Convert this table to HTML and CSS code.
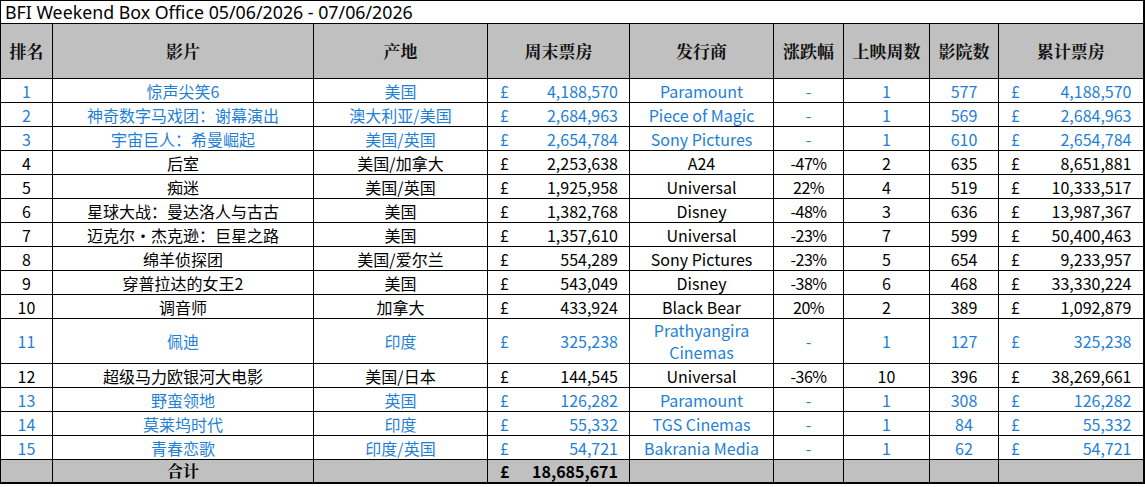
FILE: index.html
```html
<!DOCTYPE html>
<html lang="zh">
<head>
<meta charset="utf-8">
<title>BFI Weekend Box Office</title>
<link rel="stylesheet" href="styles.css">
</head>
<body>
<table class="bo">
<colgroup>
<col class="c-rank"><col class="c-film"><col class="c-origin"><col class="c-gross"><col class="c-dist"><col class="c-chg"><col class="c-wk"><col class="c-cin"><col class="c-total">
</colgroup>
<thead>
<tr class="title-row"><td colspan="9" class="title">BFI Weekend Box Office 05/06/2026 - 07/06/2026</td></tr>
<tr class="head-row">
<th>排名</th><th>影片</th><th>产地</th><th>周末票房</th><th>发行商</th><th>涨跌幅</th><th>上映周数</th><th>影院数</th><th>累计票房</th>
</tr>
</thead>
<tbody>
<tr class="new"><td>1</td><td>惊声尖笑6</td><td>美国</td><td><div class="money"><span>£</span><span>4,188,570</span></div></td><td>Paramount</td><td>-</td><td>1</td><td>577</td><td><div class="money"><span>£</span><span>4,188,570</span></div></td></tr>
<tr class="new"><td>2</td><td>神奇数字马戏团：谢幕演出</td><td>澳大利亚/美国</td><td><div class="money"><span>£</span><span>2,684,963</span></div></td><td>Piece of Magic</td><td>-</td><td>1</td><td>569</td><td><div class="money"><span>£</span><span>2,684,963</span></div></td></tr>
<tr class="new"><td>3</td><td>宇宙巨人：希曼崛起</td><td>美国/英国</td><td><div class="money"><span>£</span><span>2,654,784</span></div></td><td>Sony Pictures</td><td>-</td><td>1</td><td>610</td><td><div class="money"><span>£</span><span>2,654,784</span></div></td></tr>
<tr><td>4</td><td>后室</td><td>美国/加拿大</td><td><div class="money"><span>£</span><span>2,253,638</span></div></td><td>A24</td><td class="pct">-47%</td><td>2</td><td>635</td><td><div class="money"><span>£</span><span>8,651,881</span></div></td></tr>
<tr><td>5</td><td>痴迷</td><td>美国/英国</td><td><div class="money"><span>£</span><span>1,925,958</span></div></td><td>Universal</td><td class="pct">22%</td><td>4</td><td>519</td><td><div class="money"><span>£</span><span>10,333,517</span></div></td></tr>
<tr><td>6</td><td>星球大战：曼达洛人与古古</td><td>美国</td><td><div class="money"><span>£</span><span>1,382,768</span></div></td><td>Disney</td><td class="pct">-48%</td><td>3</td><td>636</td><td><div class="money"><span>£</span><span>13,987,367</span></div></td></tr>
<tr><td>7</td><td>迈克尔·杰克逊：巨星之路</td><td>美国</td><td><div class="money"><span>£</span><span>1,357,610</span></div></td><td>Universal</td><td class="pct">-23%</td><td>7</td><td>599</td><td><div class="money"><span>£</span><span>50,400,463</span></div></td></tr>
<tr><td>8</td><td>绵羊侦探团</td><td>美国/爱尔兰</td><td><div class="money"><span>£</span><span>554,289</span></div></td><td>Sony Pictures</td><td class="pct">-23%</td><td>5</td><td>654</td><td><div class="money"><span>£</span><span>9,233,957</span></div></td></tr>
<tr><td>9</td><td>穿普拉达的女王2</td><td>美国</td><td><div class="money"><span>£</span><span>543,049</span></div></td><td>Disney</td><td class="pct">-38%</td><td>6</td><td>468</td><td><div class="money"><span>£</span><span>33,330,224</span></div></td></tr>
<tr><td>10</td><td>调音师</td><td>加拿大</td><td><div class="money"><span>£</span><span>433,924</span></div></td><td>Black Bear</td><td class="pct">20%</td><td>2</td><td>389</td><td><div class="money"><span>£</span><span>1,092,879</span></div></td></tr>
<tr class="new tall"><td>11</td><td>佩迪</td><td>印度</td><td><div class="money"><span>£</span><span>325,238</span></div></td><td class="wrap">Prathyangira<br>Cinemas</td><td>-</td><td>1</td><td>127</td><td><div class="money"><span>£</span><span>325,238</span></div></td></tr>
<tr><td>12</td><td>超级马力欧银河大电影</td><td>美国/日本</td><td><div class="money"><span>£</span><span>144,545</span></div></td><td>Universal</td><td class="pct">-36%</td><td>10</td><td>396</td><td><div class="money"><span>£</span><span>38,269,661</span></div></td></tr>
<tr class="new"><td>13</td><td>野蛮领地</td><td>英国</td><td><div class="money"><span>£</span><span>126,282</span></div></td><td>Paramount</td><td>-</td><td>1</td><td>308</td><td><div class="money"><span>£</span><span>126,282</span></div></td></tr>
<tr class="new"><td>14</td><td>莫莱坞时代</td><td>印度</td><td><div class="money"><span>£</span><span>55,332</span></div></td><td>TGS Cinemas</td><td>-</td><td>1</td><td>84</td><td><div class="money"><span>£</span><span>55,332</span></div></td></tr>
<tr class="new"><td>15</td><td>青春恋歌</td><td>印度/英国</td><td><div class="money"><span>£</span><span>54,721</span></div></td><td>Bakrania Media</td><td>-</td><td>1</td><td>62</td><td><div class="money"><span>£</span><span>54,721</span></div></td></tr>
</tbody>
<tfoot>
<tr class="total-row"><td></td><td class="total-label">合计</td><td></td><td><div class="money bold"><span>£</span><span>18,685,671</span></div></td><td></td><td></td><td></td><td></td><td></td></tr>
</tfoot>
</table>
</body>
</html>
```

FILE: styles.css
```css
html, body {
  margin: 0;
  padding: 0;
  background: #ffffff;
}

body {
  font-family: "Noto Sans CJK SC", "Noto Sans", sans-serif;
  color: #000;
}

.bo {
  border-collapse: collapse;
  table-layout: fixed;
  width: 1144px;
  font-size: 16px;
  border-right: 2px solid #000;
  border-bottom: 2px solid #000;
}

.c-rank { width: 52px; }
.c-film { width: 261px; }
.c-origin { width: 174px; }
.c-gross { width: 142px; }
.c-dist { width: 144px; }
.c-chg { width: 70px; }
.c-wk { width: 86px; }
.c-cin { width: 69px; }
.c-total { width: 145px; }

.bo td, .bo th {
  border: 1px solid #000;
  padding: 0;
  text-align: center;
  vertical-align: middle;
  white-space: nowrap;
  overflow: hidden;
  line-height: 22px;
}

.title-row td {
  height: 22px;
}

.title {
  text-align: left !important;
  padding-left: 4px !important;
  font-size: 17.8px;
  line-height: 22px;
  font-family: "Noto Sans", "Noto Sans CJK SC", sans-serif;
}

.head-row th {
  height: 54px;
  background: #c0c0c0;
  font-family: "Noto Serif CJK SC", "Noto Sans CJK SC", serif;
  font-weight: 700;
  font-size: 17px;
  color: #111;
}

tbody tr td {
  height: 23px;
}

tbody tr.tall td {
  height: 44px;
}

.wrap {
  white-space: normal;
  line-height: 22px !important;
}

.new td {
  color: #1f7fd6;
}

.pct {
  letter-spacing: -0.5px;
}

.money {
  display: flex;
  justify-content: space-between;
  padding: 0 11px 0 12px;
}

.money.bold {
  font-weight: 700;
}

.total-row td {
  height: 22px;
  background: #c0c0c0;
}

.total-label {
  font-weight: 700;
  font-family: "Noto Serif CJK SC", "Noto Sans CJK SC", serif;
}
```
